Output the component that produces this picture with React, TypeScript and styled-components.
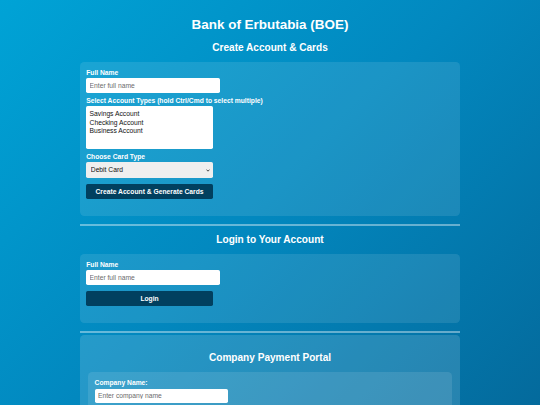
import React from "react";
import styled, { createGlobalStyle } from "styled-components";

const GlobalStyle = createGlobalStyle`
  html {
    min-height: 100%;
    background: linear-gradient(135deg, #00a3d6 0%, #0288bf 50%, #046a9c 100%) fixed;
  }
  body {
    margin: 0;
    font-family: "Liberation Sans", Arial, sans-serif;
    color: #ffffff;
  }
  * { box-sizing: border-box; }
`;

const Page = styled.div`
  padding: 8.4px;
`;

const Container = styled.main`
  max-width: 380px;
  margin: 0 auto;
`;

const Title = styled.h1`
  font-size: 13.44px;
  font-weight: bold;
  text-align: center;
  margin: 9px 0;
  line-height: 15.45px;
`;

const SectionTitle = styled.h2`
  font-size: 10.08px;
  font-weight: bold;
  text-align: center;
  margin: 8.4px 0;
  line-height: 11.6px;
`;

const Card = styled.section<{ $tone?: "base" | "portal"; $pad?: number }>`
  background: ${(p) =>
    p.$tone === "portal"
      ? "rgba(255, 255, 255, 0.14)"
      : "rgba(255, 255, 255, 0.1)"};
  border-radius: 4.2px;
  padding: ${(p) => p.$pad ?? 6.2}px;
`;

const Divider = styled.hr<{ $after: number }>`
  border: none;
  height: 2px;
  background: rgba(255, 255, 255, 0.4);
  margin: 8px 0 ${(p) => p.$after}px;
`;

const Field = styled.div`
  margin-bottom: 3.5px;
`;

const Label = styled.label`
  display: block;
  font-size: 6.72px;
  font-weight: bold;
  line-height: 9px;
  margin-bottom: 1.1px;
  color: #ffffff;
`;

const TextInput = styled.input`
  display: block;
  width: 133.6px;
  height: 14.7px;
  padding: 0 3.4px;
  border: none;
  border-radius: 1.7px;
  background: #ffffff;
  font-family: "Liberation Sans", Arial, sans-serif;
  font-size: 6.72px;
  color: #222;
  &::placeholder {
    color: #6c6c6c;
  }
`;

const ListBox = styled.select`
  display: block;
  width: 126.7px;
  height: 42.3px;
  padding: 4px 3.4px;
  border: none;
  border-radius: 1.7px;
  background: #ffffff;
  font-family: "Liberation Sans", Arial, sans-serif;
  font-size: 6.72px;
  color: #111;
  overflow: hidden;
  option {
    padding: 0;
    min-height: 0;
    line-height: 8.3px;
    height: 8.3px;
  }
`;

const DropWrap = styled.div`
  position: relative;
  width: 126.7px;
`;

const DropDown = styled.select`
  display: block;
  width: 100%;
  height: 15.3px;
  padding: 0 10px 0 4.6px;
  border: none;
  border-radius: 1.7px;
  background-color: #efefef;
  appearance: none;
  -webkit-appearance: none;
  font-family: "Liberation Sans", Arial, sans-serif;
  font-size: 6.72px;
  color: #111;
`;

const Chevron = styled.svg`
  position: absolute;
  right: 2.6px;
  top: 6.3px;
  width: 4px;
  height: 3px;
  pointer-events: none;
`;

const Button = styled.button`
  display: block;
  width: 126.7px;
  height: 14.7px;
  margin: 6.3px 0 11px;
  padding: 0;
  border: none;
  border-radius: 1.7px;
  background: #01405f;
  color: #ffffff;
  font-family: "Liberation Sans", Arial, sans-serif;
  font-size: 6.72px;
  font-weight: bold;
  text-align: center;
  cursor: pointer;
`;

export default function App() {
  return (
    <>
      <GlobalStyle />
      <Page>
        <Container>
          <Title>Bank of Erbutabia (BOE)</Title>

          <SectionTitle>Create Account &amp; Cards</SectionTitle>
          <Card>
            <Field>
              <Label htmlFor="create-name">Full Name</Label>
              <TextInput id="create-name" placeholder="Enter full name" />
            </Field>
            <Field>
              <Label htmlFor="acct-types">
                Select Account Types (hold Ctrl/Cmd to select multiple)
              </Label>
              <ListBox id="acct-types" multiple>
                <option>Savings Account</option>
                <option>Checking Account</option>
                <option>Business Account</option>
              </ListBox>
            </Field>
            <Field>
              <Label htmlFor="card-type">Choose Card Type</Label>
              <DropWrap>
                <DropDown id="card-type" defaultValue="debit">
                  <option value="debit">Debit Card</option>
                  <option value="credit">Credit Card</option>
                </DropDown>
                <Chevron viewBox="0 0 4 3" aria-hidden="true">
                  <path d="M0.5 0.6 L2 2.2 L3.5 0.6" fill="none" stroke="#222" strokeWidth="0.8" />
                </Chevron>
              </DropWrap>
            </Field>
            <Button>Create Account &amp; Generate Cards</Button>
          </Card>

          <Divider $after={8} />

          <SectionTitle>Login to Your Account</SectionTitle>
          <Card>
            <Field>
              <Label htmlFor="login-name">Full Name</Label>
              <TextInput id="login-name" placeholder="Enter full name" />
            </Field>
            <Button>Login</Button>
          </Card>

          <Divider $after={2.2} />

          <Card $tone="portal" $pad={8.4}>
            <SectionTitle>Company Payment Portal</SectionTitle>
            <Card>
              <Field>
                <Label htmlFor="company-name">Company Name:</Label>
                <TextInput id="company-name" placeholder="Enter company name" />
              </Field>
            </Card>
          </Card>
        </Container>
      </Page>
    </>
  );
}
